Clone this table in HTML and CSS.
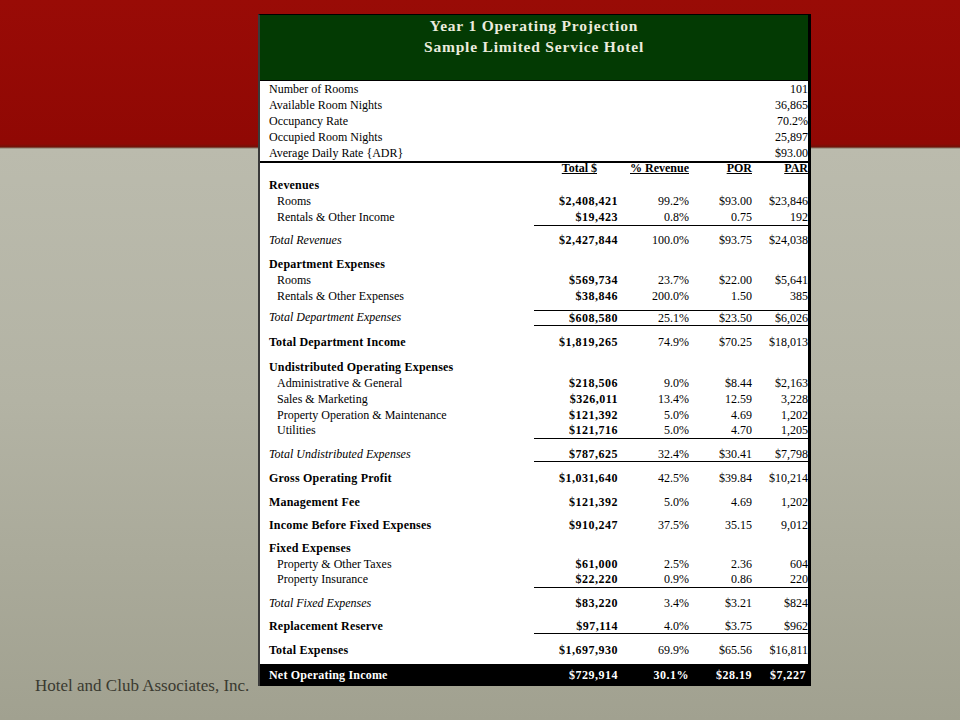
FILE: index.html
```html
<!DOCTYPE html>
<html>
<head>
<meta charset="utf-8">
<link rel="stylesheet" href="styles.css">
</head>
<body>
<div class="slide">
  <div class="side">
    <div class="credit">Hotel and Club Associates, Inc.</div>
  </div>
  <div class="sheet">
    <div class="hdr">
      <div class="title">Year 1 Operating Projection</div>
      <div class="title">Sample Limited Service Hotel</div>
    </div>
    <div class="info">
      <div class="irow"><span>Number of Rooms</span><span>101</span></div>
      <div class="irow"><span>Available Room Nights</span><span>36,865</span></div>
      <div class="irow"><span>Occupancy Rate</span><span>70.2%</span></div>
      <div class="irow"><span>Occupied Room Nights</span><span>25,897</span></div>
      <div class="irow"><span>Average Daily Rate {ADR}</span><span>$93.00</span></div>
    </div>

    <div class="row h11 colhead"><span class="lbl"></span><div class="nums"><span class="c1">Total $</span><span>% Revenue</span><span>POR</span><span>PAR</span></div></div>

    <div class="row g3"><span class="lbl b">Revenues</span><div class="nums"></div></div>
    <div class="row"><span class="lbl s">Rooms</span><div class="nums"><span class="t">$2,408,421</span><span>99.2%</span><span>$93.00</span><span>$23,846</span></div></div>
    <div class="row ub"><span class="lbl s">Rentals &amp; Other Income</span><div class="nums"><span class="t">$19,423</span><span>0.8%</span><span>0.75</span><span>192</span></div></div>
    <div class="row g6"><span class="lbl i">Total Revenues</span><div class="nums"><span class="t">$2,427,844</span><span>100.0%</span><span>$93.75</span><span>$24,038</span></div></div>

    <div class="row g8"><span class="lbl b">Department Expenses</span><div class="nums"></div></div>
    <div class="row"><span class="lbl s">Rooms</span><div class="nums"><span class="t">$569,734</span><span>23.7%</span><span>$22.00</span><span>$5,641</span></div></div>
    <div class="row"><span class="lbl s">Rentals &amp; Other Expenses</span><div class="nums"><span class="t">$38,846</span><span>200.0%</span><span>1.50</span><span>385</span></div></div>
    <div class="row g6 h14 ut ub"><span class="lbl i">Total Department Expenses</span><div class="nums"><span class="t">$608,580</span><span>25.1%</span><span>$23.50</span><span>$6,026</span></div></div>
    <div class="row g8"><span class="lbl b">Total Department Income</span><div class="nums"><span class="t">$1,819,265</span><span>74.9%</span><span>$70.25</span><span>$18,013</span></div></div>

    <div class="row g9"><span class="lbl b">Undistributed Operating Expenses</span><div class="nums"></div></div>
    <div class="row"><span class="lbl s">Administrative &amp; General</span><div class="nums"><span class="t">$218,506</span><span>9.0%</span><span>$8.44</span><span>$2,163</span></div></div>
    <div class="row"><span class="lbl s">Sales &amp; Marketing</span><div class="nums"><span class="t">$326,011</span><span>13.4%</span><span>12.59</span><span>3,228</span></div></div>
    <div class="row"><span class="lbl s">Property Operation &amp; Maintenance</span><div class="nums"><span class="t">$121,392</span><span>5.0%</span><span>4.69</span><span>1,202</span></div></div>
    <div class="row h15 ub"><span class="lbl s">Utilities</span><div class="nums"><span class="t">$121,716</span><span>5.0%</span><span>4.70</span><span>1,205</span></div></div>
    <div class="row g9 h13 ub"><span class="lbl i">Total Undistributed Expenses</span><div class="nums"><span class="t">$787,625</span><span>32.4%</span><span>$30.41</span><span>$7,798</span></div></div>
    <div class="row g8"><span class="lbl b">Gross Operating Profit</span><div class="nums"><span class="t">$1,031,640</span><span>42.5%</span><span>$39.84</span><span>$10,214</span></div></div>
    <div class="row g8"><span class="lbl b">Management Fee</span><div class="nums"><span class="t">$121,392</span><span>5.0%</span><span>4.69</span><span>1,202</span></div></div>
    <div class="row g7"><span class="lbl b">Income Before Fixed Expenses</span><div class="nums"><span class="t">$910,247</span><span>37.5%</span><span>35.15</span><span>9,012</span></div></div>

    <div class="row g7"><span class="lbl b">Fixed Expenses</span><div class="nums"></div></div>
    <div class="row"><span class="lbl s">Property &amp; Other Taxes</span><div class="nums"><span class="t">$61,000</span><span>2.5%</span><span>2.36</span><span>604</span></div></div>
    <div class="row h15 ub"><span class="lbl s">Property Insurance</span><div class="nums"><span class="t">$22,220</span><span>0.9%</span><span>0.86</span><span>220</span></div></div>
    <div class="row g7"><span class="lbl i">Total Fixed Expenses</span><div class="nums"><span class="t">$83,220</span><span>3.4%</span><span>$3.21</span><span>$824</span></div></div>
    <div class="row g9 h13 ub"><span class="lbl b">Replacement Reserve</span><div class="nums"><span class="t">$97,114</span><span>4.0%</span><span>$3.75</span><span>$962</span></div></div>
    <div class="row g8"><span class="lbl b">Total Expenses</span><div class="nums"><span class="t">$1,697,930</span><span>69.9%</span><span>$65.56</span><span>$16,811</span></div></div>

    <div class="row g6 h22 noi"><span class="lbl b">Net Operating Income</span><div class="nums"><span class="t">$729,914</span><span>30.1%</span><span>$28.19</span><span class="last">$7,227</span></div></div>
  </div>
</div>
</body>
</html>
```

FILE: styles.css
```css
html, body {
  margin: 0;
  padding: 0;
}

.slide {
  width: 960px;
  height: 720px;
  box-sizing: border-box;
  padding-top: 14px;
  display: flex;
  background: linear-gradient(to bottom,
    #990b06 0px, #900804 144px, #701208 147px, #8a7a6a 148px,
    #bbbbad 149px, #b3b3a4 400px, #a1a190 720px);
  overflow: hidden;
}

.side {
  width: 258px;
  display: flex;
  flex-direction: column;
  justify-content: flex-end;
  padding-bottom: 24px;
}

.credit {
  padding-left: 35px;
  font-family: "Liberation Serif", serif;
  font-size: 17px;
  line-height: 20px;
  color: #3a3a30;
  white-space: nowrap;
}

.sheet {
  width: 553px;
  height: 672px;
  box-sizing: border-box;
  border-left: 2px solid #3a3a3a;
  border-right: 3px solid #000;
  border-top: 1px solid #000;
  background: #fff;
  font-family: "Liberation Serif", serif;
  font-size: 12px;
  color: #000;
  align-self: flex-start;
}

.hdr {
  height: 65px;
  background: #033a03;
  border-bottom: 1px solid #000;
  text-align: center;
}

.title {
  font-size: 15.5px;
  font-weight: bold;
  line-height: 21px;
  letter-spacing: 0.8px;
  color: #ebebdd;
}

.info {
  border-bottom: 2px solid #000;
}

.irow {
  display: flex;
  justify-content: space-between;
  height: 16px;
  line-height: 16px;
  padding-left: 9px;
}

.row {
  display: flex;
  line-height: 16px;
}

.lbl {
  width: 274px;
  box-sizing: border-box;
  white-space: nowrap;
}

.lbl.b { font-weight: bold; padding-left: 9px; letter-spacing: 0.2px; }
.lbl.i { font-style: italic; padding-left: 9px; }
.lbl.s { padding-left: 17px; }

.nums {
  width: 274px;
  display: grid;
  grid-template-columns: 84px 71px 63px 56px;
}

.nums span {
  text-align: right;
  white-space: nowrap;
}

.nums .t {
  font-weight: bold;
  letter-spacing: 0.5px;
}

.colhead .nums span {
  font-weight: bold;
  text-decoration: underline;
}

.colhead .nums .c1 {
  padding-right: 21px;
}

.ub .nums { border-bottom: 1px solid #000; }
.ut .nums { border-top: 1px solid #000; }

.h11 { line-height: 11px; }
.h13 { line-height: 13px; }
.h14 { line-height: 14px; }
.h15 { line-height: 15px; }
.h22 { line-height: 22px; }

.g3 { margin-top: 3px; }
.g6 { margin-top: 6px; }
.g7 { margin-top: 7px; }
.g8 { margin-top: 8px; }
.g9 { margin-top: 9px; }

.noi {
  background: #000;
  color: #fff;
}

.noi .nums span {
  font-weight: bold;
  letter-spacing: 0.5px;
}

.noi .nums .last {
  padding-right: 2px;
}
```
